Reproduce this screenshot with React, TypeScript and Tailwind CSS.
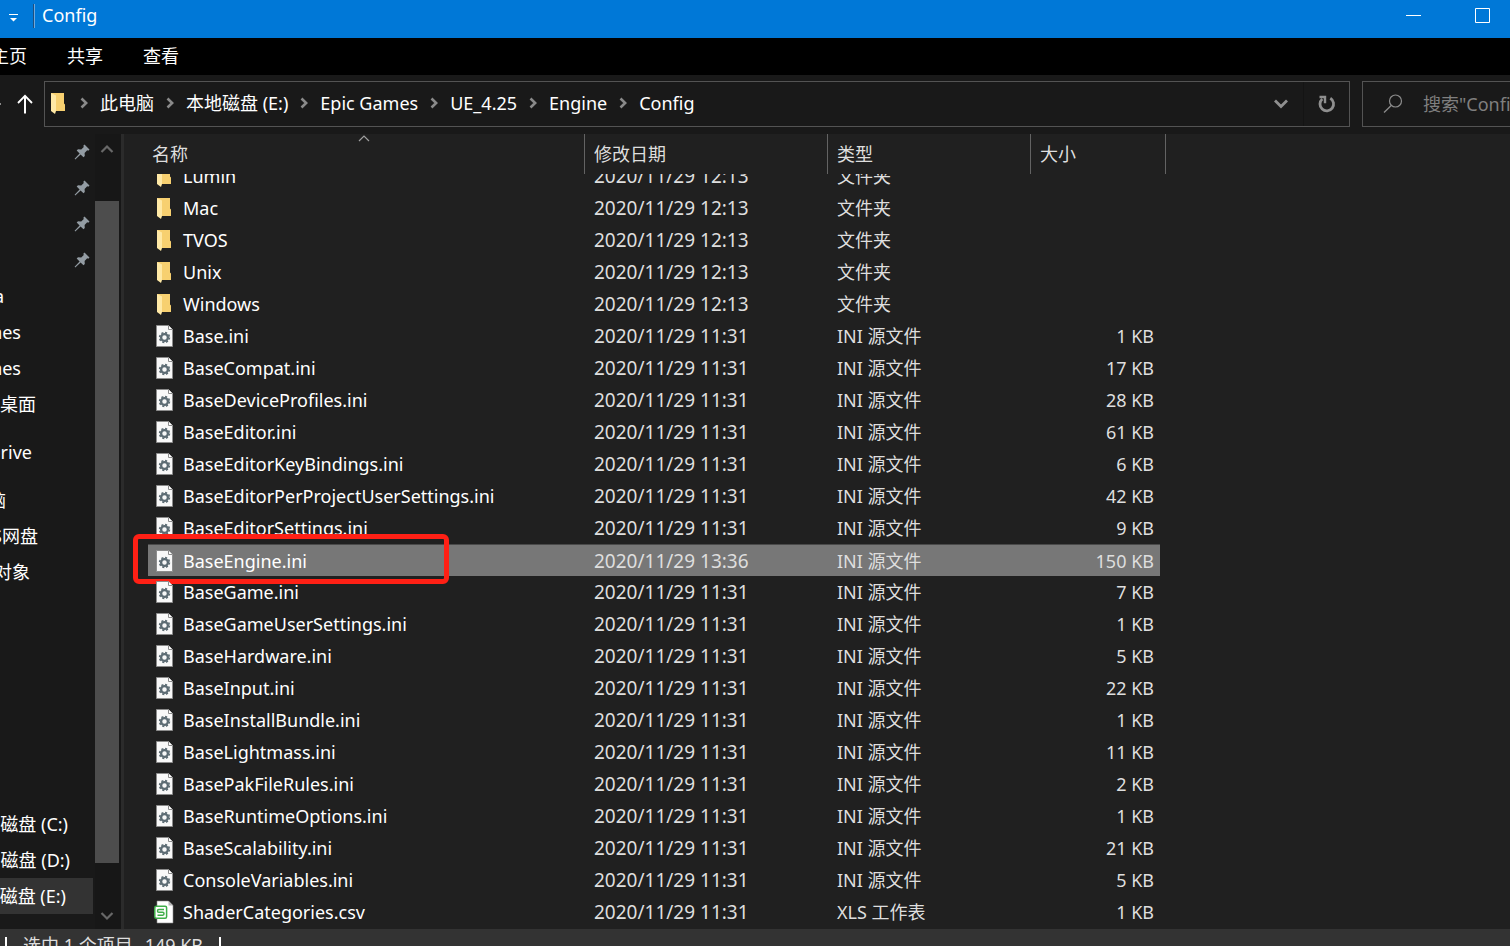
import { Fragment, useLayoutEffect, useRef } from "react";
import clsx from "clsx";

type FileKind = "folder" | "ini" | "csv";

type FileEntry = {
  name: string;
  date: string;
  kind: FileKind;
  size?: string;
};

type SideItem = {
  label: string;
  width: string;
  space?: string;
  active?: boolean;
};

const folders = ["Lumin", "Mac", "TVOS", "Unix", "Windows"];

const iniFiles: [string, string][] = [
  ["Base.ini", "1 KB"],
  ["BaseCompat.ini", "17 KB"],
  ["BaseDeviceProfiles.ini", "28 KB"],
  ["BaseEditor.ini", "61 KB"],
  ["BaseEditorKeyBindings.ini", "6 KB"],
  ["BaseEditorPerProjectUserSettings.ini", "42 KB"],
  ["BaseEditorSettings.ini", "9 KB"],
  ["BaseEngine.ini", "150 KB"],
  ["BaseGame.ini", "7 KB"],
  ["BaseGameUserSettings.ini", "1 KB"],
  ["BaseHardware.ini", "5 KB"],
  ["BaseInput.ini", "22 KB"],
  ["BaseInstallBundle.ini", "1 KB"],
  ["BaseLightmass.ini", "11 KB"],
  ["BasePakFileRules.ini", "2 KB"],
  ["BaseRuntimeOptions.ini", "1 KB"],
  ["BaseScalability.ini", "21 KB"],
  ["ConsoleVariables.ini", "5 KB"],
];

const selectedName = "BaseEngine.ini";

const files: FileEntry[] = [
  ...folders.map((name) => ({
    name,
    date: "2020/11/29 12:13",
    kind: "folder" as const,
  })),
  ...iniFiles.map(([name, size]) => ({
    name,
    size,
    date: name === selectedName ? "2020/11/29 13:36" : "2020/11/29 11:31",
    kind: "ini" as const,
  })),
  {
    name: "ShaderCategories.csv",
    date: "2020/11/29 11:31",
    kind: "csv",
    size: "1 KB",
  },
];

const kindLabel: Record<FileKind, string> = {
  folder: "文件夹",
  ini: "INI 源文件",
  csv: "XLS 工作表",
};

const crumbs = [
  "此电脑",
  "本地磁盘 (E:)",
  "Epic Games",
  "UE_4.25",
  "Engine",
  "Config",
];

// the pane is narrower than its labels, so only their ends are visible
const sideItems: SideItem[] = [
  { label: "a", width: "w-1" },
  { label: "mes", width: "w-[21px]" },
  { label: "mes", width: "w-[21px]" },
  { label: "桌面", width: "w-9" },
  { label: "Drive", width: "w-8", space: "mt-3" },
  { label: "脑", width: "w-1.5", space: "mt-3" },
  { label: "S网盘", width: "w-[38px]" },
  { label: "对象", width: "w-[30px]" },
  { label: "磁盘 (C:)", width: "w-[68px]", space: "mt-54" },
  { label: "磁盘 (D:)", width: "w-[70px]" },
  { label: "磁盘 (E:)", width: "w-[66px]", active: true },
];

const FolderIcon = () => (
  <svg width="18" height="24" viewBox="0 0 18 24" className="shrink-0">
    <path d="M1 2H14V12.5L15 13.5V20H5Z" fill="#f7d070" />
    <path d="M1 2L6 4.5V20L5 23L1 20Z" fill="#ffe9a6" />
  </svg>
);

const IniIcon = () => (
  <svg width="18" height="24" viewBox="0 0 18 24" className="shrink-0">
    <path d="M.5 1.5H12.5L16.5 5.5V22.5H.5Z" fill="#f8f8f8" stroke="#8c8c8c" />
    <path d="M12.5 1.5V5.5H16.5" fill="#fff" stroke="#8c8c8c" />
    <circle
      cx="8.5"
      cy="13.5"
      r="4.9"
      fill="none"
      stroke="#5c6b73"
      strokeWidth="1.6"
      strokeDasharray="2.1 1.748"
    />
    <circle
      cx="8.5"
      cy="13.5"
      r="3.4"
      fill="none"
      stroke="#5c6b73"
      strokeWidth="2.3"
    />
  </svg>
);

const CsvIcon = () => (
  <svg width="20" height="24" viewBox="0 0 20 24" className="-ml-0.5 shrink-0">
    <path d="M3 1H14.500L19 5.500V23H3Z" fill="#fff" stroke="#8c8c8c" strokeWidth=".6" />
    <path d="M14.500 1V5.500H19Z" fill="#b5b5b5" />
    <rect x=".8" y="6.300" width="11.800" height="12" rx="1.500" fill="#fff" stroke="#3fae49" strokeWidth="1.500" />
    <path
      d="M10 9.500H4.800Q3.500 9.500 3.500 10.900T4.800 12.300H8.700Q10 12.300 10 13.700T8.700 15.200H3.500"
      fill="none"
      stroke="#3fae49"
      strokeWidth="1.500"
    />
  </svg>
);

const PinIcon = () => (
  <svg width="16" height="16" viewBox="0 0 16 16" className="block">
    <path
      d="M10.500 .5L15.500 5.500L14.300 6.700L13.200 6.300L10.600 9L10.800 12L9.500 13.300L6.600 10.400L1.300 15.500L.6 14.800L5.600 9.400L2.700 6.500L4 5.300L7.200 5.500L9.800 2.900L9.300 1.700Z"
      fill="#939ca3"
    />
  </svg>
);

const Chevron = () => (
  <svg width="8" height="12" viewBox="0 0 8 12" className="mx-3 shrink-0">
    <path d="M1.500 1.500L6.200 6L1.500 10.500" fill="none" stroke="#8a8a8a" strokeWidth="2.600" />
  </svg>
);

const FileIcon = ({ kind }: { kind: FileKind }) => {
  if (kind === "folder") return <FolderIcon />;
  if (kind === "csv") return <CsvIcon />;
  return <IniIcon />;
};

const TitleBar = () => (
  <header className="flex h-[38px] shrink-0 items-start justify-between bg-[#0078d7]">
    <div className="flex h-8 items-center">
      <button type="button" aria-label="自定义快速访问工具栏" className="ml-2 mt-1">
        <svg width="11" height="10" viewBox="0 0 11 10">
          <path d="M1 1.500H10" stroke="#fff" />
          <path d="M2 5H9L5.500 8.500Z" fill="#fff" />
        </svg>
      </button>
      <span className="ml-3.5 h-6 w-0.5 border-l border-[#1d4f80] bg-[#6fa8dc]" />
      <h1 className="mb-0.5 ml-[7px]">Config</h1>
    </div>
    <div className="flex h-8 items-center gap-[53px] pr-[19px]">
      <button type="button" aria-label="最小化">
        <svg width="16" height="16" viewBox="0 0 16 16">
          <path d="M0 7.500H15" stroke="#fff" />
        </svg>
      </button>
      <button type="button" aria-label="最大化">
        <svg width="16" height="16" viewBox="0 0 16 16">
          <path d="M.5 .5H14.500V14.500H.5Z" fill="none" stroke="#fff" />
        </svg>
      </button>
    </div>
  </header>
);

const AddressBar = () => (
  <div className="flex h-[59px] shrink-0 items-center pb-0.5">
    <div className="flex w-11 shrink-0 items-center">
      <span className="h-0.5 w-px bg-[#8a8a8a]" />
      <button type="button" aria-label="上移" className="ml-4">
        <svg width="16" height="20" viewBox="0 0 16 20" fill="none" stroke="#fff">
          <path d="M8 19.500V2" strokeWidth="2" />
          <path d="M1 9L8 1.800L15 9" strokeWidth="1.800" />
        </svg>
      </button>
    </div>
    <div className="flex h-[46px] min-w-0 flex-1 items-center border border-[#535353]">
      <div className="ml-[5px] flex flex-1 items-center whitespace-nowrap pb-0.5">
        <FolderIcon />
        {crumbs.map((c) => (
          <Fragment key={c}>
            <Chevron />
            <a href="#">{c}</a>
          </Fragment>
        ))}
      </div>
      <button type="button" aria-label="以前的位置" className="px-[15px]">
        <svg width="14" height="10" viewBox="0 0 14 10">
          <path d="M1 1.500L7 7.500L13 1.500" fill="none" stroke="#8f8f8f" strokeWidth="2.800" />
        </svg>
      </button>
      <button
        type="button"
        aria-label="刷新"
        className="flex h-full w-[46px] items-center justify-center border-l border-[#141414]"
      >
        <svg width="18" height="18" viewBox="0 0 18 18" fill="none" stroke="#8f8f8f">
          <path d="M12.300 3.300A6.800 6.800 0 1 1 4.300 4" strokeWidth="2.800" />
          <path d="M1.500 2H7V8.200" strokeWidth="2.400" />
        </svg>
      </button>
    </div>
    <label className="ml-3 flex h-[46px] w-[148px] shrink-0 items-center border border-r-0 border-[#535353]">
      <svg width="20" height="20" viewBox="0 0 20 20" className="ml-5 shrink-0">
        <circle cx="12.500" cy="7" r="6" fill="none" stroke="#8c8c8c" strokeWidth="1.200" />
        <path d="M8.200 11.500L1 18.500" stroke="#8c8c8c" strokeWidth="1.300" />
      </svg>
      <input
        type="text"
        aria-label="搜索"
        placeholder={'搜索"Config"'}
        className="ml-5 w-full min-w-0 bg-transparent outline-none placeholder:text-[#7f7f7f]"
      />
    </label>
  </div>
);

const Sidebar = () => (
  <aside className="flex shrink-0">
    <nav className="w-[95px] overflow-hidden">
      {[1, 2, 3, 4].map((n) => (
        <div key={n} className="flex h-9 items-center justify-end pr-[5px]">
          <PinIcon />
        </div>
      ))}
      {sideItems.map((item, i) => (
        <a
          key={i}
          href="#"
          className={clsx(
            "mr-0.5 flex h-9 items-center",
            item.space,
            item.active && "bg-[#333333]"
          )}
        >
          <span
            className={clsx(
              "flex shrink-0 justify-end overflow-hidden whitespace-nowrap",
              item.width
            )}
          >
            {item.label}
          </span>
        </a>
      ))}
    </nav>
    <div className="flex w-[26px] flex-col items-center bg-[#171717] pr-0.5">
      <svg width="14" height="10" viewBox="0 0 14 10" className="mt-2.5 shrink-0">
        <path d="M1.500 8L7 2.500L12.500 8" fill="none" stroke="#686868" strokeWidth="2.200" />
      </svg>
      <div className="mb-12 mt-[47px] w-6 flex-1 bg-[#4d4d4d]" />
      <svg width="14" height="10" viewBox="0 0 14 10" className="mb-2 shrink-0">
        <path d="M1.500 2L7 7.500L12.500 2" fill="none" stroke="#686868" strokeWidth="2.200" />
      </svg>
    </div>
    <div className="w-[3px] bg-[#2b2b2b]" />
  </aside>
);

const FileTable = () => {
  const ref = useRef<HTMLDivElement>(null);

  // the list is scrolled a little, so the first folder sits under the header
  useLayoutEffect(() => {
    if (ref.current) ref.current.scrollTop = 14;
  }, []);

  return (
    <div ref={ref} className="min-w-0 flex-1 overflow-hidden bg-[#202020] pl-6">
      <table className="mb-4 w-[1018px] table-fixed border-separate border-spacing-0 text-left">
        <colgroup>
          <col className="w-[437px]" />
          <col className="w-[243px]" />
          <col className="w-[203px]" />
          <col className="w-[129px]" />
          <col className="w-1.5" />
        </colgroup>
        <thead className="sticky top-0 z-10 bg-[#202020] text-[#dedede]">
          <tr className="h-10">
            <th className="relative border-r border-[#636363] pl-1 font-normal">
              名称
              <svg
                width="12"
                height="7"
                viewBox="0 0 12 7"
                className="absolute left-1/2 top-px -ml-2"
              >
                <path d="M1 6L6 1L11 6" fill="none" stroke="#a0a0a0" strokeWidth="1.200" />
              </svg>
            </th>
            <th className="border-r border-[#636363] pl-[9px] font-normal">修改日期</th>
            <th className="border-r border-[#636363] pl-[9px] font-normal">类型</th>
            <th colSpan={2} className="border-r border-[#636363] pl-[9px] font-normal">
              大小
            </th>
          </tr>
        </thead>
        <tbody className="text-[#dedede]">
          {files.map((f) => {
            const selected = f.name === selectedName;
            const cell = selected && "border-t border-[#4a4a4a] bg-[#777777]";
            return (
              <tr key={f.name} className="h-8 whitespace-nowrap">
                <td className={clsx("relative pl-2 text-white", cell)}>
                  <div className="flex items-center gap-[9px]">
                    <FileIcon kind={f.kind} />
                    {f.name}
                  </div>
                  {selected && (
                    <span className="absolute -left-[15px] -top-[11px] h-[50px] w-[316px] rounded-md border-5 border-[#ff2015]" />
                  )}
                </td>
                <td className={clsx("pl-[9px] text-[19px]", cell)}>{f.date}</td>
                <td className={clsx("pl-[9px]", cell)}>{kindLabel[f.kind]}</td>
                <td className={clsx("pr-1.5 text-right", cell)}>{f.size}</td>
                <td />
              </tr>
            );
          })}
        </tbody>
      </table>
    </div>
  );
};

export default function App() {
  return (
    <div className="flex h-screen flex-col overflow-hidden bg-[#191919] font-['Noto_Sans','Noto_Sans_CJK_SC',sans-serif] text-[18px] leading-6 text-white">
      <TitleBar />
      <nav className="flex h-[37px] shrink-0 items-center gap-10 bg-black pb-0.5">
        <a href="#" className="flex w-[27px] justify-end overflow-hidden whitespace-nowrap">
          主页
        </a>
        <a href="#">共享</a>
        <a href="#">查看</a>
      </nav>
      <AddressBar />
      <main className="flex min-h-0 flex-1">
        <Sidebar />
        <FileTable />
      </main>
      <footer className="flex h-[17px] shrink-0 items-start overflow-hidden bg-[#333333] text-[#dedede]">
        <span className="ml-[5px] mt-2 h-6 w-0.5 bg-white" />
        <span className="ml-4 mt-1">选中 1 个项目</span>
        <span className="ml-3 mt-1">149 KB</span>
        <span className="ml-4 mt-2 h-6 w-0.5 bg-white" />
      </footer>
    </div>
  );
}
